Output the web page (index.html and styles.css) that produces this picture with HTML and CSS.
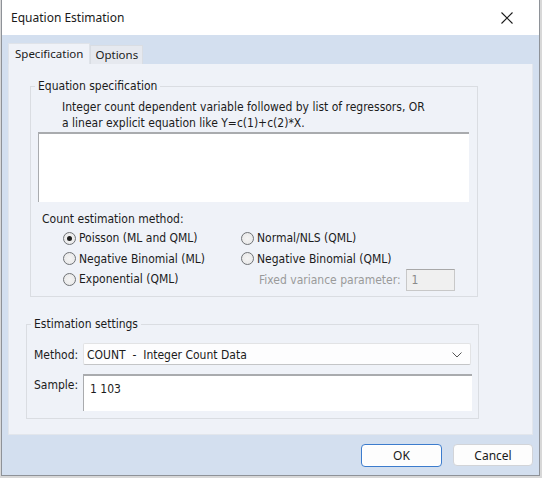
FILE: index.html
```html
<!DOCTYPE html>
<html>
<head>
<meta charset="utf-8">
<link rel="stylesheet" href="styles.css">
</head>
<body>
<div class="window">
  <div class="titlebar">
    <span class="title">Equation Estimation</span>
    <svg class="close" width="12" height="12" viewBox="0 0 12 12"><path d="M0.5 0.5 L11.5 11.5 M11.5 0.5 L0.5 11.5" stroke="#1a1a1a" stroke-width="1.1" fill="none"/></svg>
  </div>
  <div class="client">
    <div class="tabs">
      <div class="tab active">Specification</div>
      <div class="tab">Options</div>
    </div>
    <div class="panel">
      <div class="group g1">
        <div class="legend">Equation specification</div>
        <div class="desc">Integer count dependent variable followed by list of regressors, OR<br>a linear explicit equation like Y=c(1)+c(2)*X.</div>
        <div class="textarea"></div>
        <div class="sublabel">Count estimation method:</div>
        <div class="radios">
          <div class="radio"><span class="dot on"></span>Poisson (ML and QML)</div>
          <div class="radio"><span class="dot"></span>Normal/NLS (QML)</div>
          <div class="radio"><span class="dot"></span>Negative Binomial (ML)</div>
          <div class="radio"><span class="dot"></span>Negative Binomial (QML)</div>
          <div class="radio"><span class="dot"></span>Exponential (QML)</div>
          <div class="fixed"><span class="muted">Fixed variance parameter:</span><span class="smallbox">1</span></div>
        </div>
      </div>
      <div class="group g2">
        <div class="legend">Estimation settings</div>
        <div class="row method">
          <span class="lbl">Method:</span>
          <div class="combo"><span>COUNT&nbsp; - &nbsp;Integer Count Data</span>
            <svg width="10" height="6" viewBox="0 0 10 6"><path d="M0.5 0.5 L5 5 L9.5 0.5" stroke="#555" stroke-width="1" fill="none"/></svg>
          </div>
        </div>
        <div class="row sample">
          <span class="lbl">Sample:</span>
          <div class="samplebox">1 103</div>
        </div>
      </div>
    </div>
    <div class="buttons">
      <div class="btn default">OK</div>
      <div class="btn">Cancel</div>
    </div>
  </div>
</div>
</body>
</html>
```
FILE: styles.css
```css
html, body {
  margin: 0;
  padding: 0;
  background: #d8d8d8;
  width: 542px;
  height: 478px;
  overflow: hidden;
}
.window {
  margin-left: 1px;
  width: 539px;
  height: 476px;
  box-sizing: border-box;
  border: 1px solid #8e9298;
  border-top: none;
  background: #d3dfef;
  display: flex;
  flex-direction: column;
}
.titlebar {
  height: 35px;
  background: #ffffff;
  display: flex;
  align-items: center;
  justify-content: space-between;
  padding: 0 26px 0 9px;
  flex: none;
}
.title {
  font-family: "Noto Sans", "Open Sans", sans-serif;
  font-size: 12px;
  color: #1a1a1a;
}
.client {
  padding: 8px 0 0 6px;
  font-family: "DejaVu Sans Condensed", "DejaVu Sans", sans-serif;
  font-stretch: condensed;
  font-size: 12px;
  color: #1b1b1b;
}
.tabs {
  display: flex;
  align-items: flex-end;
  height: 21px;
}
.tab {
  font-family: "Noto Sans", "Open Sans", sans-serif;
  font-stretch: normal;
  font-size: 11.5px;
  height: 19px;
  line-height: 18px;
  padding: 0 4px;
  background: #e6e9ef;
  border: 1px solid #d9dde3;
  border-bottom: none;
  box-sizing: border-box;
}
.tab.active {
  height: 21px;
  line-height: 20px;
  background: #eff2f8;
  border-color: #dfe3e9;
  padding: 0 6px;
}
.panel {
  width: 525px;
  height: 371px;
  box-sizing: border-box;
  background: #eff2f8;
  border: 1px solid #e2e6ec;
  border-top: none;
  overflow: hidden;
}
.group {
  border: 1px solid #dadde2;
  box-sizing: border-box;
}
.legend {
  width: fit-content;
  margin: -8px 0 0 4px;
  padding: 0 3px;
  background: #eff2f8;
  line-height: 15px;
}
.g1 {
  margin: 22px 0 0 21px;
  width: 448px;
  height: 211px;
}
.desc {
  margin: 5px 0 0 31px;
  line-height: 16px;
}
.textarea {
  margin: 1px 0 0 7px;
  width: 431px;
  height: 70px;
  background: #fff;
  box-sizing: border-box;
  border-top: 2px solid #a9abae;
  border-left: 1px solid #a9abae;
}
.sublabel {
  margin: 10px 0 0 11px;
  line-height: 15px;
}
.radios {
  margin: 1px 0 0 32px;
  display: grid;
  grid-template-columns: 178px 1fr;
  grid-auto-rows: 20.5px;
  align-items: center;
}
.radio {
  display: flex;
  align-items: center;
  gap: 3px;
}
.dot {
  width: 13px;
  height: 13px;
  box-sizing: border-box;
  border-radius: 50%;
  border: 1px solid #6f7276;
  background: radial-gradient(circle, #f4f4f4 0, #e6e6e6 100%);
  position: relative;
  flex: none;
}
.dot.on::after {
  content: "";
  position: absolute;
  left: 3px;
  top: 3px;
  width: 5px;
  height: 5px;
  border-radius: 50%;
  background: #1e1e1e;
}
.fixed {
  display: flex;
  align-items: center;
  padding-left: 18px;
  gap: 5px;
  margin-top: 2px;
}
.muted {
  color: #9a9a9a;
}
.smallbox {
  width: 49px;
  height: 22px;
  box-sizing: border-box;
  border: 1px solid #c8c8c8;
  border-top-color: #a8a8a8;
  background: #f0f0f0;
  color: #8a8a8a;
  padding: 3px 0 0 5px;
}
.g2 {
  margin: 27px 0 0 17px;
  width: 453px;
  height: 95px;
}
.row {
  display: flex;
  align-items: flex-start;
}
.lbl {
  width: 49px;
  padding-left: 7px;
  flex: none;
}
.method {
  margin-top: 11px;
  align-items: center;
}
.method .lbl {
  padding-top: 2px;
}
.combo {
  width: 388px;
  height: 22px;
  box-sizing: border-box;
  background: #fdfdfe;
  border: 1px solid #e2e3e5;
  border-bottom-color: #c4c5c7;
  border-radius: 2px;
  display: flex;
  align-items: center;
  justify-content: space-between;
  padding: 1px 8px 0 3px;
}
.sample {
  margin-top: 9px;
}
.sample .lbl {
  padding-top: 4px;
}
.samplebox {
  width: 389px;
  height: 37px;
  box-sizing: border-box;
  background: #fff;
  border-top: 2px solid #a9abae;
  border-left: 1px solid #a9abae;
  padding: 6px 0 0 6px;
}
.buttons {
  display: flex;
  justify-content: flex-end;
  gap: 11px;
  margin-top: 9px;
  padding-right: 6px;
}
.btn {
  font-family: "Noto Sans", "Open Sans", sans-serif;
  font-stretch: normal;
  font-size: 12px;
  width: 80px;
  height: 22px;
  box-sizing: border-box;
  background: #fdfdfd;
  border: 1px solid #d2d4d8;
  border-radius: 4px;
  display: flex;
  align-items: center;
  justify-content: center;
  color: #1a1a1a;
}
.btn.default {
  width: 81px;
  height: 23px;
  border: 1px solid #3c7ccd;
  box-shadow: inset 0 0 0 1px #ffffff;
}
```
